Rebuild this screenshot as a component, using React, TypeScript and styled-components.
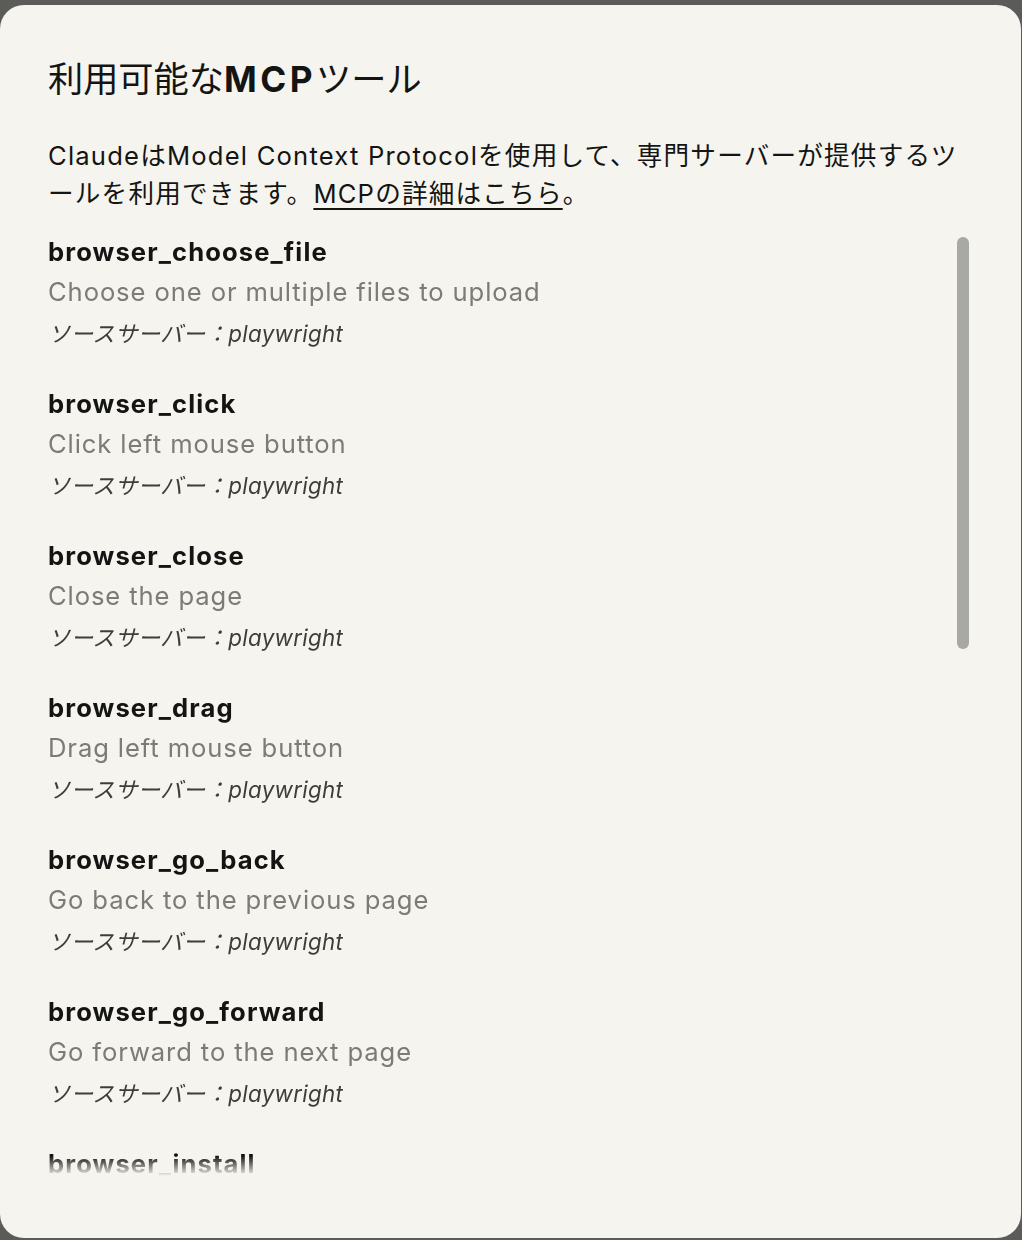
import styled, { createGlobalStyle } from "styled-components";

interface Tool {
  name: string;
  description: string;
  server: string;
}

const tools: Tool[] = [
  { name: "browser_choose_file", description: "Choose one or multiple files to upload", server: "playwright" },
  { name: "browser_click", description: "Click left mouse button", server: "playwright" },
  { name: "browser_close", description: "Close the page", server: "playwright" },
  { name: "browser_drag", description: "Drag left mouse button", server: "playwright" },
  { name: "browser_go_back", description: "Go back to the previous page", server: "playwright" },
  { name: "browser_go_forward", description: "Go forward to the next page", server: "playwright" },
  { name: "browser_install", description: "Install the browser specified in the config", server: "playwright" },
  { name: "browser_navigate", description: "Navigate to a URL", server: "playwright" },
  { name: "browser_pdf_save", description: "Save page as PDF", server: "playwright" },
  { name: "browser_press_key", description: "Press a key on the keyboard", server: "playwright" },
  { name: "browser_resize", description: "Resize the browser window", server: "playwright" },
  { name: "browser_snapshot", description: "Capture accessibility snapshot of the current page", server: "playwright" },
  { name: "browser_tab_close", description: "Close a tab", server: "playwright" },
  { name: "browser_type", description: "Type text into editable element", server: "playwright" },
];

const GlobalStyle = createGlobalStyle`
  html, body {
    margin: 0;
    padding: 0;
    background: #5b5b59;
  }
  body {
    font-family: Inter, "Noto Sans CJK JP", sans-serif;
    color: #141413;
  }
`;

const Dialog = styled.div`
  margin-top: 5px;
  width: 1021px;
  height: 1233px;
  box-sizing: border-box;
  background: #f5f4ee;
  border-radius: 24px;
  padding: 49px 48px 62px 48px;
  display: flex;
  flex-direction: column;
`;

const Title = styled.h2`
  margin: 0;
  font-size: 35.2px;
  line-height: 50px;
  font-weight: 400;
  color: #141413;

  strong {
    font-weight: 700;
    letter-spacing: 3.5px;
  }
`;

const Intro = styled.p`
  margin: 33px 0 0;
  font-size: 25.6px;
  line-height: 38px;
  letter-spacing: 1.2px;
  color: #141413;

  a {
    color: inherit;
    text-decoration: underline;
    text-underline-offset: 5px;
    text-decoration-thickness: 2px;
  }
`;

const ListArea = styled.div`
  position: relative;
  margin-top: 19px;
  flex: 1;
  min-height: 0;
  display: flex;
`;

const ToolList = styled.ul`
  list-style: none;
  margin: 0;
  padding: 0 0 40px;
  flex: 1;
  overflow-y: auto;
  scrollbar-width: none;
  display: flex;
  flex-direction: column;
  gap: 32px;
  mask-image: linear-gradient(to bottom, #000 calc(100% - 20px), transparent 100%);

  &::-webkit-scrollbar {
    display: none;
  }
`;

const ScrollThumb = styled.div`
  position: absolute;
  top: 5px;
  right: 4px;
  width: 12px;
  height: 412px;
  border-radius: 6px;
  background: #a8a8a4;
`;

const ToolItem = styled.li`
  display: flex;
  flex-direction: column;
  flex-shrink: 0;
`;

const ToolName = styled.div`
  font-size: 25.6px;
  line-height: 40px;
  font-weight: 700;
  letter-spacing: 1.1px;
  color: #141413;
`;

const ToolDesc = styled.div`
  font-size: 25.6px;
  line-height: 40px;
  letter-spacing: 0.9px;
  color: #7b7b77;
`;

const ToolSource = styled.div`
  margin-top: 4px;
  font-size: 22.4px;
  line-height: 36px;
  font-style: italic;
  letter-spacing: 0.3px;
  color: #3d3d3a;
`;

function App() {
  return (
    <>
      <GlobalStyle />
      <Dialog>
        <Title>
          利用可能な<strong>MCP</strong>ツール
        </Title>
        <Intro>
          ClaudeはModel Context Protocolを使用して、専門サーバーが提供するツールを利用できます。
          <a href="#">MCPの詳細はこちら</a>。
        </Intro>
        <ListArea>
          <ToolList>
            {tools.map((tool) => (
              <ToolItem key={tool.name}>
                <ToolName>{tool.name}</ToolName>
                <ToolDesc>{tool.description}</ToolDesc>
                <ToolSource>ソースサーバー：{tool.server}</ToolSource>
              </ToolItem>
            ))}
          </ToolList>
          <ScrollThumb />
        </ListArea>
      </Dialog>
    </>
  );
}

export default App;
